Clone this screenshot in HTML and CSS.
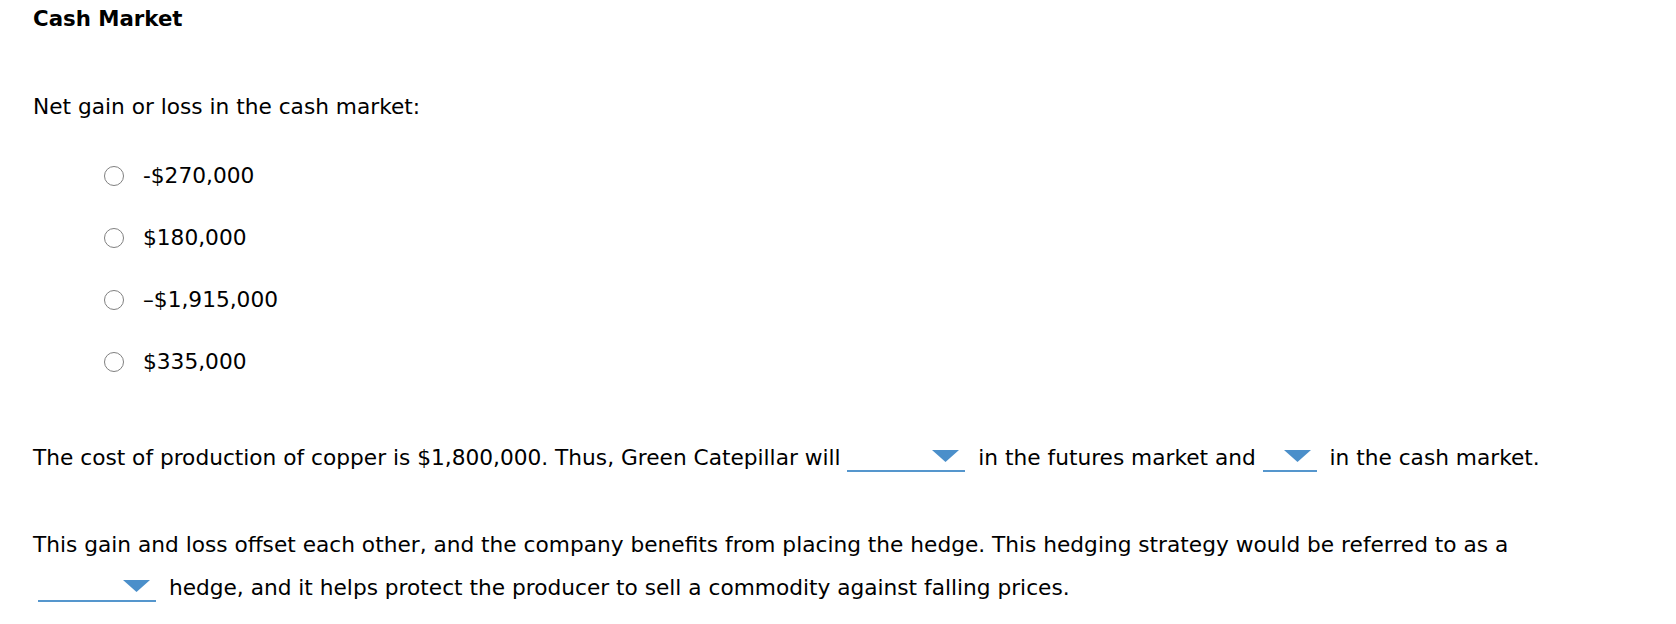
FILE: index.html
```html
<!DOCTYPE html>
<html>
<head>
<meta charset="utf-8">
<link rel="stylesheet" href="styles.css">
</head>
<body>
<div class="page">
  <h2 class="title">Cash Market</h2>
  <p class="question">Net gain or loss in the cash market:</p>
  <ul class="options">
    <li class="option"><span class="radio"></span><span class="label">-$270,000</span></li>
    <li class="option"><span class="radio"></span><span class="label">$180,000</span></li>
    <li class="option"><span class="radio"></span><span class="label">–$1,915,000</span></li>
    <li class="option"><span class="radio"></span><span class="label">$335,000</span></li>
  </ul>
  <p class="sentence s3">The cost of production of copper is $1,800,000. Thus, Green Catepillar will <span class="dd dd-wide"><svg class="tri" viewBox="0 0 27 12" width="27" height="12"><polygon points="0,0 27,0 13.5,12"/></svg></span> in the futures market and <span class="dd dd-narrow"><svg class="tri" viewBox="0 0 27 12" width="27" height="12"><polygon points="0,0 27,0 13.5,12"/></svg></span> in the cash market.</p>
  <p class="sentence s4">This gain and loss offset each other, and the company benefits from placing the hedge. This hedging strategy would be referred to as a <span class="dd dd-wide dd-start"><svg class="tri" viewBox="0 0 27 12" width="27" height="12"><polygon points="0,0 27,0 13.5,12"/></svg></span> hedge, and it helps protect the producer to sell a commodity against falling prices.</p>
</div>
</body>
</html>
```
FILE: styles.css
```css
html, body {
  margin: 0;
  padding: 0;
  background: #fff;
}
body {
  font-family: "DejaVu Sans", Verdana, sans-serif;
  font-size: 21.7px;
  color: #000;
}
.page {
  padding: 6px 0 0 33px;
}
.title {
  margin: 0;
  font-size: 21.3px;
  font-weight: bold;
  line-height: 26px;
}
.question {
  margin: 62px 0 0 0;
  line-height: 26px;
}
.options {
  list-style: none;
  margin: 43px 0 0 0;
  padding: 0 0 0 71px;
}
.option {
  display: flex;
  align-items: center;
  height: 26px;
  margin-bottom: 36px;
}
.option:last-child {
  margin-bottom: 0;
}
.radio {
  box-sizing: border-box;
  width: 20px;
  height: 20px;
  border: 1.8px solid #808080;
  border-radius: 50%;
  flex: none;
}
.label {
  margin-left: 19px;
  line-height: 26px;
}
.sentence {
  margin: 0;
  line-height: 43px;
}
.s3 {
  margin-top: 61px;
}
.s4 {
  margin-top: 44px;
  max-width: 1540px;
}
.dd {
  display: inline-block;
  position: relative;
  height: 25px;
  border-bottom: 2px solid #5596cd;
  vertical-align: -7px;
  margin: 0 6px 0 0;
}
.dd-wide { width: 118px; }
.dd-narrow { width: 54px; }
.dd-start { margin-left: 5px; }
.tri {
  position: absolute;
  right: 6px;
  top: 5px;
  fill: #4b8fca;
}
```
